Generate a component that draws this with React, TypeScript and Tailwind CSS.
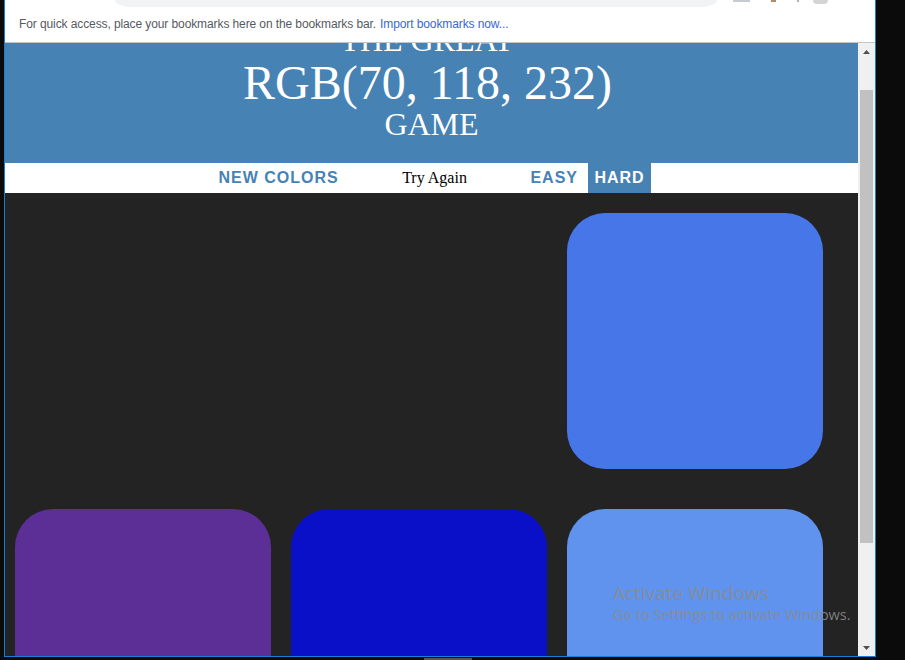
import React from 'react';

const squares = [
  { color: 'bg-transparent' },
  { color: 'bg-transparent' },
  { color: 'bg-[#4676e8]' },
  { color: 'bg-[#5b2f96]' },
  { color: 'bg-[#0a0fc8]' },
  { color: 'bg-[#5f93ed]' },
];

function Arrow({ up }: { up?: boolean }) {
  return (
    <div className="h-[17px] flex items-center justify-center">
      <svg width="7" height="4" viewBox="0 0 7 4">
        {up ? <path d="M3.5 0 L7 4 L0 4 Z" fill="#505050" /> : <path d="M0 0 L7 0 L3.5 4 Z" fill="#505050" />}
      </svg>
    </div>
  );
}

export default function App() {
  return (
    <div className="relative w-[905px] h-[660px] overflow-hidden bg-[#0b0b0b]">
      {/* Browser window */}
      <div className="absolute left-[4px] top-0 w-[872px] h-[657px] flex flex-col bg-white border-x border-b border-[#1a7fd4]">
        {/* Chrome tail + bookmarks bar */}
        <div className="relative h-[43px] border-b border-[#c4c4c4] shrink-0">
          <div className="ml-[110px] w-[602px] h-[7px] bg-[#f1f3f4] rounded-b-[16px_7px]" />
          <div className="mt-[9px] pl-[14px] flex items-center gap-[4px] text-[12px] leading-[16px] tracking-[-0.1px] font-['Liberation_Sans',Arial,sans-serif]">
            <span className="text-[#555a5f]">For quick access, place your bookmarks here on the bookmarks bar.</span>
            <span className="text-[#3a66d4]">Import bookmarks now...</span>
          </div>
          {/* cropped toolbar icon bits */}
          <div className="absolute left-[728px] top-0 w-[17px] h-[2px] bg-[#c4cbd2]" />
          <div className="absolute left-[766px] top-0 w-[5px] h-[2px] bg-[#b08a6a]" />
          <div className="absolute left-[792px] top-0 w-[2px] h-[2px] bg-[#b0b0b0]" />
          <div className="absolute left-[808px] top-0 w-[15px] h-[4px] rounded-b-full bg-[#d4d4d4]" />
        </div>

        {/* Page + scrollbar */}
        <div className="flex flex-1 min-h-0">
          <div className="w-[853px] overflow-hidden bg-[#232323]">
            <div className="-mt-[42px]">
              <div className="bg-[#4682b4] text-white text-center pt-[20px] pb-[21px] font-['Liberation_Serif','Times_New_Roman',serif]">
                <div className="text-[32px] leading-[38px] pr-[9px]">THE GREAT</div>
                <div className="text-[48px] leading-[47px] pr-[8px]">RGB(70, 118, 232)</div>
                <div className="text-[32px] leading-[36px]">GAME</div>
              </div>

              <div className="h-[30px] bg-white flex justify-center gap-[4.4px]">
                <button className="px-[6px] font-['Liberation_Sans',Arial,sans-serif] font-bold text-[16px] tracking-[1px] text-[#4682b4] uppercase">
                  New Colors
                </button>
                <span className="w-[171px] flex items-center justify-center text-[16px] text-black font-['Liberation_Serif','Times_New_Roman',serif]">
                  Try Again
                </span>
                <button className="px-[6px] font-['Liberation_Sans',Arial,sans-serif] font-bold text-[16px] tracking-[1px] text-[#4682b4] uppercase">
                  Easy
                </button>
                <button className="px-[6px] font-['Liberation_Sans',Arial,sans-serif] font-bold text-[16px] tracking-[1px] bg-[#4682b4] text-white uppercase">
                  Hard
                </button>
              </div>

              <div className="pt-[20px] pl-[10px] grid grid-cols-[repeat(3,256px)] gap-x-[20px] gap-y-[40px]">
                {squares.map((s, i) => (
                  <div key={i} className={`h-[256px] rounded-[38px] ${s.color}`} />
                ))}
              </div>
            </div>
          </div>

          {/* Scrollbar */}
          <div className="w-[17px] bg-[#f0f0f0] flex flex-col">
            <Arrow up />
            <div className="flex-1 px-[2px] pt-[30px]">
              <div className="h-[453px] bg-[#c1c1c1]" />
            </div>
            <Arrow />
          </div>
        </div>
      </div>

      {/* Windows activation watermark */}
      <div className="absolute left-[613px] top-[581px] text-[rgba(140,140,140,0.88)] font-['Open_Sans','Noto_Sans',sans-serif] pointer-events-none">
        <div className="text-[19px] leading-[24px]">Activate Windows</div>
        <div className="text-[14.5px] leading-[20px] whitespace-nowrap">Go to Settings to activate Windows.</div>
      </div>

      {/* taskbar hint */}
      <div className="absolute left-[424px] top-[658px] w-[48px] h-[2px] bg-[#555555]" />
    </div>
  );
}
